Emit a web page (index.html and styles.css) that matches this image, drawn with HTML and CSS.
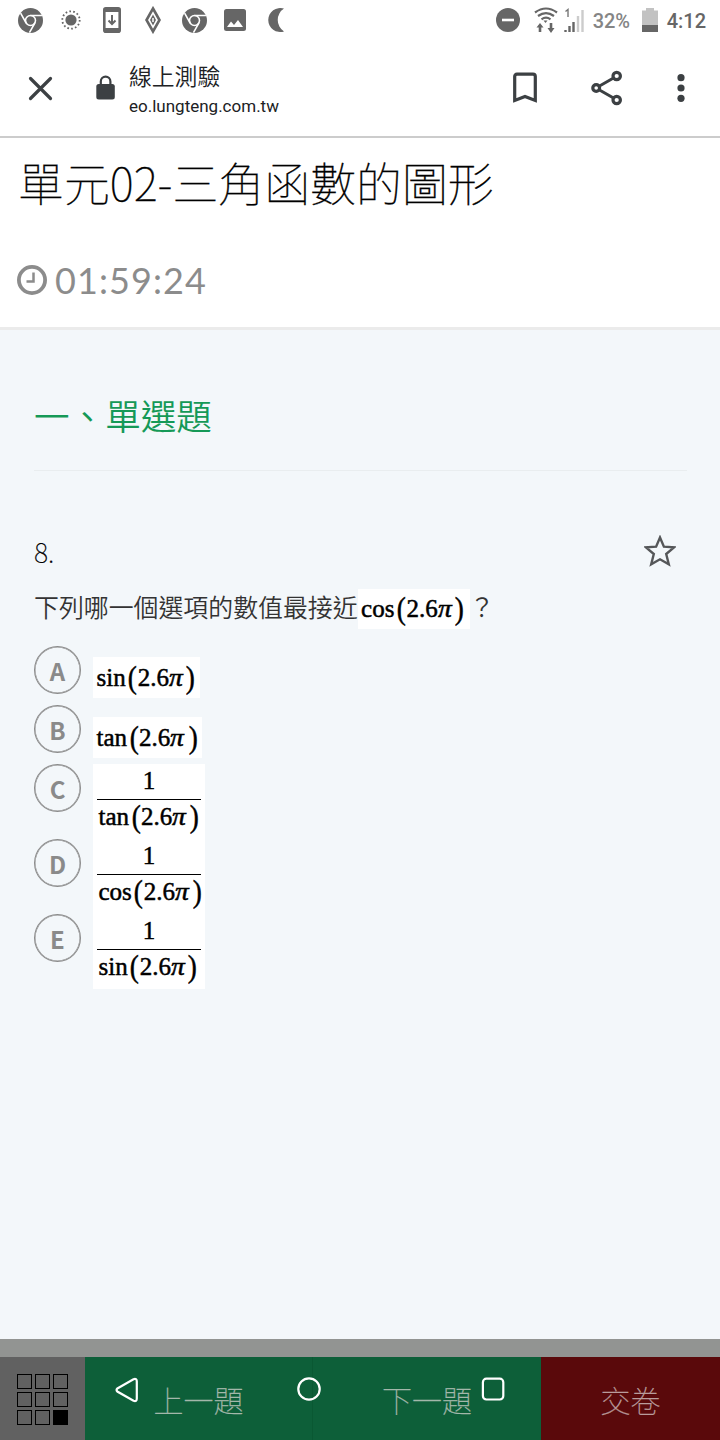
FILE: index.html
```html
<!DOCTYPE html>
<html lang="zh-Hant">
<head>
    <meta charset="UTF-8">
    <meta name="viewport" content="width=device-width, initial-scale=1.0">
    <title>線上測驗</title>
    <link rel="stylesheet" href="styles.css">
</head>
<body>
    <svg class="defs" width="0" height="0">
        <symbol id="chrome" viewBox="0 0 24 24">
            <circle cx="12" cy="12" r="12" fill="#666"/>
            <circle cx="12" cy="12" r="4.800" fill="none" stroke="#fff" stroke-width="1.500"/>
            <path d="M12 7.200H23M7.800 14.400L2.500 5M16.200 14.400L11 23.600" fill="none" stroke="#fff" stroke-width="1.500"/>
        </symbol>
    </svg>

    <!-- Status bar -->
    <div class="status">
        <div class="notices">
            <svg width="25" height="25"><use href="#chrome"/></svg>
            <svg width="20" height="20" viewBox="0 0 20 20"><circle cx="10" cy="10" r="5.600" fill="#666"/><circle cx="10" cy="10" r="8.700" fill="none" stroke="#666" stroke-width="1.800" stroke-dasharray="1.700 2.204"/></svg>
            <svg width="18" height="26" viewBox="0 0 18 26"><rect x="1.300" y="1.300" width="15.400" height="23.400" rx="1.500" fill="#fff" stroke="#666" stroke-width="2.600"/><path d="M1 3h16M1 23h16" stroke="#666" stroke-width="4"/><path d="M9 8v9M5.500 13.500L9 17l3.500-3.500" fill="none" stroke="#666" stroke-width="2"/></svg>
            <svg width="18" height="28" viewBox="0 0 18 28"><path d="M9 2.500L15.500 14 9 25.500 2.500 14z" fill="none" stroke="#666" stroke-width="2.600"/><path d="M9 8.500L12 14 9 19.500 6 14z" fill="#666"/><path d="M9 12v4" stroke="#fff" stroke-width="1.500"/></svg>
            <svg width="25" height="25"><use href="#chrome"/></svg>
            <svg width="22" height="22" viewBox="0 0 22 22"><rect width="22" height="22" rx="2.500" fill="#666"/><path d="M3 18L7 12.500 10 16 14 11 19 18z" fill="#fff"/></svg>
            <svg width="16" height="24" viewBox="0 0 16 24"><path d="M16 .6A12 12 0 1 0 16 23.400 13.500 13.500 0 0 1 16 .6z" fill="#666"/></svg>
        </div>
        <div class="system">
            <svg class="dnd" width="24" height="24" viewBox="0 0 24 24"><circle cx="12" cy="12" r="12" fill="#666"/><path d="M6 12h12" stroke="#fff" stroke-width="2.600"/></svg>
            <svg class="wifi" width="24" height="26" viewBox="0 0 24 26"><path d="M1 5.500Q12-2.500 23 5.500M4 9Q12 3.300 20 9M7.500 12.300Q12 9 16.500 12.300" fill="none" stroke="#666" stroke-width="2.200"/><path d="M9.500 13.500h4L11.500 16z" fill="#666"/><path d="M6 25v-7M17 16v7" stroke="#666" stroke-width="2.600"/><path d="M2.500 20.500L6 16l3.500 4.500zM13.500 21L17 26l3.500-5z" fill="#666"/></svg>
            <svg class="signal" width="20" height="24" viewBox="0 0 20 24"><path d="M1.500 3.500L4 1.500V9" fill="none" stroke="#777" stroke-width="1.400"/><path d="M1.500 24v-2M5.500 24v-6M9.500 24v-10" stroke="#666" stroke-width="2.400"/><path d="M14 24V8M18.500 24V2" stroke="#ccc" stroke-width="2.400"/></svg>
            <span class="percent">32%</span>
            <svg class="battery" width="16" height="24" viewBox="0 0 16 24"><path d="M0 2.500h4V0h8v2.500h4V24H0z" fill="#c2c2c2"/><path d="M0 17h16v7H0z" fill="#666"/></svg>
            <span class="clock">4:12</span>
        </div>
    </div>

    <!-- Browser toolbar -->
    <div class="toolbar">
        <svg class="close" width="26" height="26" viewBox="0 0 26 26"><path d="M3.500 3.500l20 20M23.500 3.500L3.500 23.500" stroke="#3c4043" stroke-width="3.200" stroke-linecap="round"/></svg>
        <svg class="lock" width="20" height="26" viewBox="0 0 20 26"><rect x=".3" y="9" width="18.500" height="15.500" rx="2.500" fill="#3c4043"/><path d="M4.800 10V6.500a4.800 4.800 0 0 1 9.600 0V10" fill="none" stroke="#3c4043" stroke-width="2.200"/></svg>
        <div class="address">
            <div class="page-name">線上測驗</div>
            <div class="url">eo.lungteng.com.tw</div>
        </div>
        <svg class="bookmark" width="24" height="32" viewBox="0 0 24 32"><path d="M1.700 28.500V4.500q0-2.300 2.300-2.300h16q2.300 0 2.300 2.300v24L12 24.500z" fill="none" stroke="#3c4043" stroke-width="3.200"/></svg>
        <svg class="share" width="32" height="36" viewBox="0 0 32 36"><path d="M5 18L26 6M5 18L26 30" stroke="#3c4043" stroke-width="3"/><g fill="#fff" stroke="#3c4043" stroke-width="3.200"><circle cx="5.200" cy="18" r="3.400"/><circle cx="25.700" cy="6" r="3.700"/><circle cx="25.700" cy="30" r="3.700"/></g></svg>
        <svg class="more" width="8" height="28" viewBox="0 0 8 28"><g fill="#3c4043"><circle cx="4" cy="3.700" r="3.600"/><circle cx="4" cy="14" r="3.600"/><circle cx="4" cy="24.300" r="3.600"/></g></svg>
    </div>

    <div class="exam-head">
        <h1>單元02-三角函數的圖形</h1>
        <div class="timer">
            <svg width="30" height="30" viewBox="0 0 30 30"><circle cx="15" cy="15" r="13.100" fill="none" stroke="#8c8c8c" stroke-width="3.800"/><path d="M16.500 7.500V16.500H9.500" fill="none" stroke="#8c8c8c" stroke-width="2.500"/></svg>
            <span>01:59:24</span>
        </div>
    </div>

    <div class="content">
        <h2>一、單選題</h2>

        <div class="question-head">
            <span class="number">8.</span>
            <svg width="32" height="32" viewBox="0 0 32 32"><path d="M16 2.500L19.900 11.700 30 12.400 22.200 19 24.800 29.300 16 24.300 7.200 29.300 9.800 19 2 12.400 12.100 11.700z" fill="none" stroke="#555759" stroke-width="2.400"/></svg>
        </div>
        <div class="question"><span class="stem-text">下列哪一個選項的數值最接近</span><span class="math stem"><b class="cos">cos</b><b class="paren">(</b><b>2.6<i>π</i></b><b class="paren end">)</b></span><span class="mark">？</span></div>

        <div class="option">
            <div class="letter">A</div>
            <div class="math plain-a"><b class="sin">sin</b><b class="paren">(</b><b>2.6<i>π</i></b><b class="paren end">)</b></div>
        </div>
        <div class="option">
            <div class="letter">B</div>
            <div class="math plain-b"><b class="tan">tan</b><b class="paren">(</b><b>2.6<i>π</i></b><b class="paren end">)</b></div>
        </div>
        <div class="option tall">
            <div class="letter">C</div>
            <div class="fraction">
                <div class="top">1</div>
                <div class="math bottom"><b class="tan">tan</b><b class="paren">(</b><b>2.6<i>π</i></b><b class="paren end">)</b></div>
            </div>
        </div>
        <div class="option tall">
            <div class="letter">D</div>
            <div class="fraction">
                <div class="top">1</div>
                <div class="math bottom"><b class="cos">cos</b><b class="paren">(</b><b>2.6<i>π</i></b><b class="paren end">)</b></div>
            </div>
        </div>
        <div class="option tall">
            <div class="letter">E</div>
            <div class="fraction">
                <div class="top">1</div>
                <div class="math bottom"><b class="sin">sin</b><b class="paren">(</b><b>2.6<i>π</i></b><b class="paren end">)</b></div>
            </div>
        </div>
    </div>

    <div class="footer">
        <div class="menu">
            <div class="grid"><i></i><i></i><i></i><i></i><i></i><i></i><i></i><i></i><i class="on"></i></div>
        </div>
        <div class="prev">上一題</div>
        <div class="next">下一題</div>
        <div class="submit">交卷</div>

        <!-- System navigation keys float over the page -->
        <svg class="key back" width="24" height="26" viewBox="0 0 24 26"><path d="M2.300 11.500L18.500 2.200Q21.800 1 21.800 4.500V21.500Q21.800 25 18.500 23.800L2.300 14.500Q.8 13 2.300 11.500z" fill="none" stroke="#fff" stroke-width="2.200"/></svg>
        <svg class="key home" width="24" height="24" viewBox="0 0 24 24"><circle cx="12" cy="12" r="10.700" fill="none" stroke="#fff" stroke-width="2.200"/></svg>
        <svg class="key recent" width="24" height="24" viewBox="0 0 24 24"><rect x="1.900" y="1.700" width="20.400" height="20.800" rx="3.500" fill="none" stroke="#fff" stroke-width="2.200"/></svg>
    </div>
</body>
</html>
```

FILE: styles.css
```css
* {
    box-sizing: border-box;
}

body {
    margin: 0;
    height: 1440px;
    display: flex;
    flex-direction: column;
    background-color: #fff;
    font-family: "Noto Sans CJK TC", sans-serif;
    overflow: hidden;
}

svg {
    display: block;
    flex: none;
}

.defs {
    position: absolute;
}

/* Status bar */
.status {
    height: 40px;
    display: flex;
    justify-content: space-between;
    align-items: center;
    padding: 0 14px 0 17px;
    font-family: Roboto, sans-serif;
    font-weight: 500;
    font-size: 20px;
}

.notices {
    display: grid;
    grid-template-columns: repeat(7, 41px);
    justify-items: center;
    align-items: center;
    margin-left: -7.500px;
}

.system {
    display: flex;
    align-items: center;
}

.wifi {
    margin-left: 14px;
}

.signal {
    margin-left: 6px;
}

.percent {
    width: 39px;
    margin-left: 9px;
    padding-top: 2px;
    color: #858585;
}

.battery {
    margin-left: 10px;
}

.clock {
    margin-left: 9px;
    padding-top: 2px;
    color: #666;
}

/* Browser toolbar */
.toolbar {
    height: 98px;
    display: flex;
    align-items: center;
    padding: 0 35px 0 27px;
    border-bottom: 2px solid #ccc;
}

.lock {
    margin-left: 43px;
}

.address {
    width: 200px;
    margin: 6px 0 0 13px;
    color: #202124;
}

.page-name {
    font-size: 22.800px;
    font-weight: 350;
    line-height: 30px;
}

.url {
    font-family: Roboto, sans-serif;
    font-size: 17px;
    line-height: 31px;
}

.bookmark {
    margin-left: auto;
}

.share {
    margin-left: 54px;
}

.more {
    margin-left: 54px;
}

/* Exam title and countdown */
.exam-head {
    height: 192px;
    padding: 11px 17px 0 18px;
    border-bottom: 3px solid #ebebeb;
}

h1 {
    margin: 0;
    font-size: 45.900px;
    font-weight: 100;
    line-height: 64px;
    color: #000;
    -webkit-text-stroke: 0.300px #000;
}

.timer {
    display: flex;
    align-items: center;
    gap: 8px;
    margin: 44px 0 0 -1px;
    font-family: Lato, sans-serif;
    font-size: 36px;
    letter-spacing: 1.100px;
    line-height: 46px;
    color: #8c8c8c;
}

/* Question area */
.content {
    flex: 1;
    padding: 50px 33px 0 34px;
    background-color: #f3f7fa;
}

h2 {
    height: 91px;
    margin: 0;
    border-bottom: 1px solid #e9edef;
    font-size: 35.600px;
    font-weight: 350;
    line-height: 69px;
    color: #159957;
}

.question-head {
    display: flex;
    justify-content: space-between;
    align-items: center;
    height: 48px;
    margin: 56px 11px 0 0;
}

.number {
    font-size: 27px;
    font-weight: 100;
    color: #000;
    -webkit-text-stroke: 0.200px #000;
}

.question {
    display: flex;
    align-items: center;
    height: 44px;
    margin: 12px 0 15px;
    font-size: 24.900px;
    font-weight: 350;
    color: #333;
}

.stem-text,
.mark {
    line-height: 36px;
    margin-bottom: 6px;
}

.option {
    display: flex;
    height: 59px;
}

.option.tall {
    height: 75px;
}

.letter {
    width: 47px;
    height: 48px;
    margin-right: 12px;
    border: 1px solid #8c8c8c;
    border-radius: 50%;
    box-shadow: inset 0 0 0 0.500px #8c8c8c;
    font-size: 24px;
    font-weight: 700;
    line-height: 47px;
    text-align: center;
    color: #8a8a8a;
}

.math,
.fraction {
    background-color: #fff;
    font-family: "Liberation Serif", serif;
    color: #000;
    -webkit-text-stroke: 0.500px #000;
}

.math {
    display: flex;
    align-items: center;
    height: 41px;
    padding-left: 3.500px;
    font-size: 25px;
    line-height: 40px;
    white-space: nowrap;
}

.math b {
    font-weight: 400;
}

.math i {
    display: inline-block;
    transform: scaleX(1.1);
    transform-origin: left;
}

.math .paren {
    font-size: 32px;
    line-height: 36px;
    width: 10.500px;
    margin-left: 1.500px;
    transform: translateY(-1px) scaleX(.85);
}

.math .end {
    margin-left: 4px;
}

.stem {
    width: 112px;
    height: 40px;
}

.plain-a {
    width: 107px;
    margin-top: 11px;
}

.plain-b {
    width: 109px;
    margin-top: 12px;
}

.plain-b .end {
    margin-left: 5px;
}

.fraction {
    width: 112px;
    padding: 0 4px;
}

.top {
    height: 36px;
    border-bottom: 1.500px solid #000;
    font-size: 25px;
    line-height: 34px;
    text-align: center;
}

.bottom {
    height: 34px;
    padding-left: 1.500px;
}

/* Bottom bar */
.footer {
    position: relative;
    display: flex;
    height: 101px;
    border-top: 18px solid #929492;
    font-size: 30px;
    font-weight: 100;
    line-height: 85px;
    color: #a3b7aa;
    -webkit-text-stroke: 0.300px;
}

.menu {
    width: 85px;
    padding: 17px;
    background-color: #616161;
}

.grid {
    display: grid;
    grid-template-columns: repeat(3, 15px);
    gap: 3px;
}

.grid i {
    height: 15px;
    border: 1px solid #000;
}

.grid .on {
    background-color: #000;
}

.prev,
.next {
    width: 228px;
    background-color: #0d5f39;
    text-align: center;
}

.prev {
    border-right: 1px solid #0a5833;
}

.submit {
    flex: 1;
    background-color: #5a090b;
    text-align: center;
    color: #b99c9c;
}

.key {
    position: absolute;
}

.back {
    left: 115px;
    top: 20px;
}

.home {
    left: 297px;
    top: 20px;
}

.recent {
    left: 481px;
    top: 20px;
}
```
